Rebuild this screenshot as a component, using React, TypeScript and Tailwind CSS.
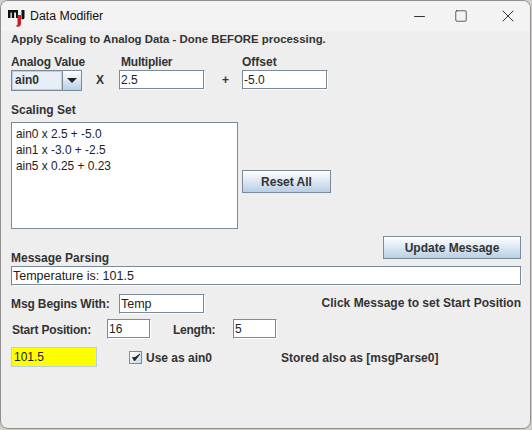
import React from "react";
import { Minus, Square, X } from "lucide-react";

const font = { fontFamily: '"Liberation Sans", Arial, sans-serif' };

const Field = ({ value, className }: { value: string; className: string }) => (
  <div
    className={`h-[20px] bg-white border border-[#7a8a99] border-r-white border-b-white shadow-[inset_-1px_-1px_0_#7a8a99] pl-[1px] leading-[18px] text-[#222] ${className}`}
  >
    {value}
  </div>
);

const SwingButton = ({ label, className }: { label: string; className: string }) => (
  <div
    className={`h-[23px] flex items-center justify-center border border-[#7a8a99] bg-gradient-to-b from-white to-[#b8cfe5] text-[12px] font-bold text-[#333] ${className}`}
  >
    {label}
  </div>
);

export default function App() {
  return (
    <div style={font} className="w-[532px] h-[430px] bg-[#cfcfc8]">
      <div className="w-[531px] h-[429px] rounded-[8px] border border-[#8f8f8f] bg-[#eeeeee] overflow-hidden text-[#333] text-[12px]">
        {/* title bar */}
        <div className="h-[30px] bg-[#f3f3f3] flex items-center">
          <svg width="17" height="18" viewBox="0 0 17 18" className="ml-[7px] mt-[3px]">
            <path d="M0 1h10v8H8V3.500H6.200V9H3.800V3.500H2.500V9H0z" fill="#111" />
            <path d="M9.500 6h3.500v8.500c0 2-1 3.200-3 3.200H8.500v-1.700h.5c.4 0 .5-.2.500-.6z" fill="#c8202a" />
            <path d="M13.500 1H16.500v7.500c0 1.200-.7 1.800-1.700 1.800h-1.300z" fill="#111" />
          </svg>
          <span className="ml-[5px] text-[12.300px] font-normal text-[#111]">Data Modifier</span>
          <div className="ml-auto flex items-center text-[#111]">
            <Minus size={17} strokeWidth={1.2} className="mr-[26px]" />
            <Square size={14} strokeWidth={1.1} className="mr-[30px]" />
            <X size={20} strokeWidth={1} className="mr-[12px]" />
          </div>
        </div>

        <div className="pl-[10px] pr-[9px]">
          <div className="mt-[2px] h-[12px] leading-[12px] font-bold text-[11.400px] text-[#333]">
            Apply Scaling to Analog Data - Done BEFORE processing.
          </div>

          <div className="mt-[10px] flex h-[14px] leading-[14px] font-bold">
            <span className="w-[110px] tracking-[-0.1px]">Analog Value</span>
            <span className="w-[121px] tracking-[-0.2px]">Multiplier</span>
            <span>Offset</span>
          </div>

          <div className="mt-[1px] flex items-center h-[20px]">
            <div className="w-[71px] h-[21px] flex border border-[#7a8a99] bg-white">
              <div className="w-[50px] border border-[#b8cfe5] bg-[#e8eef5] pl-[2px] text-[12px] font-bold leading-[17px]">
                ain0
              </div>
              <div className="flex-1 flex items-center justify-center border-l border-[#7a8a99] bg-gradient-to-b from-white to-[#b8cfe5]">
                <div className="w-0 h-0 border-l-[5px] border-r-[5px] border-t-[5px] border-l-transparent border-r-transparent border-t-[#222]" />
              </div>
            </div>
            <span className="ml-[14px] w-[23px] font-bold">X</span>
            <Field value="2.5" className="w-[86px]" />
            <span className="ml-[17px] w-[20px] font-bold">+</span>
            <Field value="-5.0" className="w-[86px]" />
          </div>

          <div className="mt-[13px] h-[14px] leading-[14px] font-bold">Scaling Set</div>

          <div className="mt-[5px] flex">
            <div className="w-[227px] h-[107px] bg-white border border-[#7a8a99] px-[4px] py-[3px] text-[11.900px] leading-[16px] text-[#222]">
              <div>ain0 x 2.5 + -5.0</div>
              <div>ain1 x -3.0 + -2.5</div>
              <div>ain5 x 0.25 + 0.23</div>
            </div>
            <SwingButton label="Reset All" className="ml-[4px] mt-[48px] w-[89px]" />
          </div>

          <div className="mt-[7px] flex items-end h-[23px]">
            <span className="font-bold leading-[14px] mb-[-6px]">Message Parsing</span>
            <SwingButton label="Update Message" className="ml-auto w-[138px]" />
          </div>

          <Field value="Temperature is: 101.5" className="mt-[7px] w-[511px] text-[12.500px]" />

          <div className="mt-[8px] flex items-center h-[20px]">
            <span className="w-[108px] font-bold tracking-[-0.12px]">Msg Begins With:</span>
            <Field value="Temp" className="w-[86px] text-[12.500px]" />
            <span className="ml-auto mb-[3px] font-bold">Click Message to set Start Position</span>
          </div>

          <div className="mt-[5px] flex items-center h-[20px]">
            <span className="ml-[1px] mt-[2px] w-[95px] font-bold tracking-[-0.2px]">Start Position:</span>
            <Field value="16" className="w-[44px]" />
            <span className="ml-[22px] mt-[2px] w-[60px] font-bold tracking-[-0.25px]">Length:</span>
            <Field value="5" className="w-[44px]" />
          </div>

          <div className="mt-[8px] flex items-center h-[20px]">
            <div className="w-[86px] h-[20px] bg-[#ffff00] border border-[#b8cfe5] pl-[2px] leading-[18px] text-[#222]">
              101.5
            </div>
            <div className="ml-[32px] w-[13px] h-[13px] flex items-center justify-center border border-[#7a8a99] bg-gradient-to-br from-white to-[#c5d8ea]">
              <svg width="10" height="10" viewBox="0 0 10 10">
                <path d="M1.500 5.500L3.500 9L9 2L4 5.500z" fill="#222" stroke="#222" strokeWidth="0.800" />
              </svg>
            </div>
            <span className="ml-[4px] mt-[2px] w-[135px] font-bold">Use as ain0</span>
            <span className="mt-[2px] font-bold">Stored also as [msgParse0]</span>
          </div>
        </div>
      </div>
    </div>
  );
}
